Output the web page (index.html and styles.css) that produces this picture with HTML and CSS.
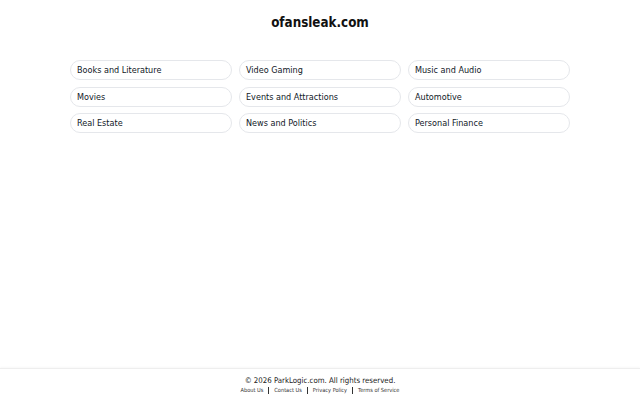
FILE: index.html
```html
<!DOCTYPE html>
<html lang="en">
<head>
<meta charset="utf-8">
<title>ofansleak.com</title>
<link rel="stylesheet" href="styles.css">
</head>
<body>
<main class="main">
  <h1 class="title">ofansleak.com</h1>
  <div class="grid">
    <a class="pill" href="#">Books and Literature</a>
    <a class="pill" href="#">Video Gaming</a>
    <a class="pill" href="#">Music and Audio</a>
    <a class="pill" href="#">Movies</a>
    <a class="pill" href="#">Events and Attractions</a>
    <a class="pill" href="#">Automotive</a>
    <a class="pill" href="#">Real Estate</a>
    <a class="pill" href="#">News and Politics</a>
    <a class="pill" href="#">Personal Finance</a>
  </div>
</main>
<footer class="footer">
  <p class="copy">© 2026 ParkLogic.com. All rights reserved.</p>
  <nav class="links">
    <a href="#">About Us</a><span class="sep"></span><a href="#">Contact Us</a><span class="sep"></span><a href="#">Privacy Policy</a><span class="sep"></span><a href="#">Terms of Service</a>
  </nav>
</footer>
</body>
</html>
```
FILE: styles.css
```css
html, body {
  margin: 0;
  padding: 0;
  background: #ffffff;
}
body {
  font-family: "DejaVu Sans Condensed", "DejaVu Sans", sans-serif;
  color: #111827;
  min-height: 100vh;
  display: flex;
  flex-direction: column;
}
.main {
  flex: 1;
  display: flex;
  flex-direction: column;
  align-items: center;
}
.title {
  margin: 14px 0 0;
  font-size: 13.3px;
  font-weight: bold;
  line-height: 18px;
  color: #111111;
}
.grid {
  margin-top: 28px;
  width: 500px;
  display: grid;
  grid-template-columns: repeat(3, 1fr);
  column-gap: 7px;
  row-gap: 6.6px;
}
.pill {
  display: flex;
  align-items: center;
  height: 18px;
  padding: 0 6px;
  border: 1px solid #e5e7eb;
  border-radius: 10px;
  font-size: 9px;
  color: #111827;
  text-decoration: none;
}
.footer {
  border-top: 1px solid #eeeeee;
  height: 31px;
  display: flex;
  flex-direction: column;
  align-items: center;
  box-shadow: 0 -1px 2px rgba(0,0,0,0.03);
}
.copy {
  margin: 7px 0 0;
  font-size: 7.8px;
  line-height: 10px;
  color: #222222;
}
.links {
  display: flex;
  align-items: center;
  font-size: 5.6px;
  line-height: 8px;
}
.links a {
  color: #333333;
  text-decoration: none;
}
.sep {
  width: 1px;
  height: 7px;
  background: #333333;
  margin: 0 5px;
}
```
